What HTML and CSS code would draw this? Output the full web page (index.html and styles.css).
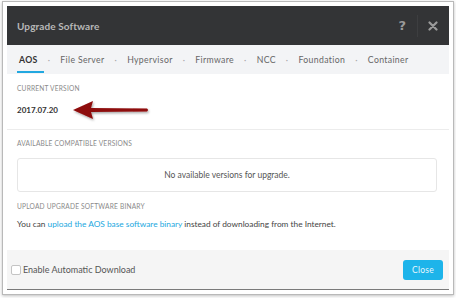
FILE: index.html
```html
<!DOCTYPE html>
<html>
<head>
<meta charset="utf-8">
<link rel="stylesheet" href="styles.css">
</head>
<body>
<div class="frame">
  <div class="dialog">
    <div class="header">
      <span class="title">Upgrade Software</span>
      <div class="actions">
        <span class="help">?</span>
        <span class="divider"></span>
        <svg class="close-x" width="10" height="10" viewBox="0 0 10 10"><path d="M1.5 1.5 L8.5 8.5 M8.5 1.5 L1.5 8.5" stroke="#9a9a9a" stroke-width="2.2" stroke-linecap="round"/></svg>
      </div>
    </div>
    <div class="tabs">
      <span class="tab active">AOS</span><span class="dot">·</span>
      <span class="tab">File Server</span><span class="dot">·</span>
      <span class="tab">Hypervisor</span><span class="dot">·</span>
      <span class="tab">Firmware</span><span class="dot">·</span>
      <span class="tab">NCC</span><span class="dot">·</span>
      <span class="tab">Foundation</span><span class="dot">·</span>
      <span class="tab">Container</span>
    </div>
    <div class="body">
      <div class="section current">
        <div class="label">CURRENT VERSION</div>
        <div class="version-row">
          <span class="version">2017.07.20</span>
          <svg class="arrow" width="80" height="24" viewBox="0 0 80 24">
            <defs>
              <filter id="sh" x="-10%" y="-30%" width="130%" height="170%">
                <feDropShadow dx="1" dy="1.5" stdDeviation="1" flood-color="#000" flood-opacity="0.35"/>
              </filter>
            </defs>
            <g filter="url(#sh)">
              <path d="M1 11 L21 2 L19 9 L75 9.5 Q77 11 75 12.5 L19 13 L21 20 Z" fill="#8e0b0b"/>
            </g>
          </svg>
        </div>
      </div>
      <div class="section available">
        <div class="label">AVAILABLE COMPATIBLE VERSIONS</div>
        <div class="empty-box">No available versions for upgrade.</div>
        <div class="label upload-label">UPLOAD UPGRADE SOFTWARE BINARY</div>
        <p class="upload-text">You can <a class="link">upload the AOS base software binary</a> instead of downloading from the Internet.</p>
      </div>
    </div>
    <div class="footer">
      <label class="auto">
        <span class="checkbox"></span>
        <span>Enable Automatic Download</span>
      </label>
      <button class="btn-close">Close</button>
    </div>
  </div>
</div>
</body>
</html>
```
FILE: styles.css
```css
* { box-sizing: border-box; }
html, body { margin: 0; padding: 0; background: #fff; }
body {
  font-family: Lato, "Open Sans", sans-serif;
  width: 456px;
  height: 298px;
  overflow: hidden;
}
.frame {
  margin: 1px 2px 0 2px;
  width: 452px;
  height: 294px;
  border: 1px solid #b9b9b9;
  padding: 4px;
  box-shadow: 0 1px 3px rgba(0,0,0,0.25);
  background: #fff;
}
.dialog {
  height: 284px;
  display: flex;
  flex-direction: column;
}
.header {
  height: 39px;
  background: #333436;
  display: flex;
  align-items: center;
  justify-content: space-between;
  padding: 0 11px 0 10px;
}
.title {
  color: #b8b8b8;
  font-size: 10px;
  font-weight: 700;
  letter-spacing: 0.1px;
}
.actions {
  display: flex;
  align-items: center;
  height: 100%;
}
.help {
  color: #9a9a9a;
  font-weight: 700;
  font-size: 13px;
  font-family: "DejaVu Sans", sans-serif;
}
.divider {
  width: 1px;
  height: 22px;
  background: #3d3e40;
  margin: 0 10px 0 11px;
}
.close-x { display: block; }
.tabs {
  height: 29px;
  background: #f3f4f6;
  display: flex;
  align-items: center;
  padding: 0 0 0 10px;
  font-size: 8.7px;
  letter-spacing: 0.35px;
  color: #666;
}
.tab {
  position: relative;
  padding: 0 2px;
  height: 29px;
  line-height: 29px;
}
.tab.active {
  color: #333;
  font-weight: 700;
}
.tab.active::after {
  content: "";
  position: absolute;
  left: 0;
  right: -4px;
  bottom: 1px;
  height: 2px;
  background: #22a8e0;
}
.dot {
  color: #aaa;
  margin: 0 8px;
}
.body {
  flex: 1;
  background: #fff;
  display: flex;
  flex-direction: column;
}
.section { padding: 0 12px 0 10px; }
.current {
  padding-top: 10px;
  height: 56px;
  border-bottom: 1px solid #ececec;
}
.label {
  font-size: 6.6px;
  color: #8a8a8a;
  letter-spacing: 0.2px;
  line-height: 9px;
}
.version-row {
  display: flex;
  align-items: center;
  margin-top: 5px;
  height: 24px;
}
.version {
  font-size: 8px;
  font-weight: 700;
  color: #333;
  width: 40px;
}
.arrow { margin-left: 15px; margin-top: 2px; display: block; }
.available { padding-top: 9px; }
.empty-box {
  margin-top: 10px;
  height: 34px;
  border: 1px solid #e6e6e6;
  border-radius: 3px;
  display: flex;
  align-items: center;
  justify-content: center;
  font-size: 8.5px;
  color: #555;
}
.upload-label { margin-top: 10px; }
.upload-text {
  margin: 8px 0 0 0;
  font-size: 8.3px;
  line-height: 11px;
  color: #444;
}
.link { color: #22a8e0; }
.footer {
  height: 40px;
  background: #f5f5f5;
  border-bottom: 1px solid #7a7a7a;
  display: flex;
  align-items: center;
  justify-content: space-between;
  padding: 0 6px 0 4px;
}
.auto {
  display: flex;
  align-items: center;
  font-size: 9px;
  color: #555;
}
.checkbox {
  width: 10px;
  height: 10px;
  border: 1px solid #c4c4c4;
  border-radius: 2px;
  background: #fff;
  margin-right: 2px;
}
.btn-close {
  width: 40px;
  height: 20px;
  border: none;
  border-radius: 3px;
  background: #1db4ea;
  color: #e8f7fd;
  font-family: Lato, sans-serif;
  font-size: 8.5px;
  letter-spacing: 0.3px;
  padding: 0;
}
```
